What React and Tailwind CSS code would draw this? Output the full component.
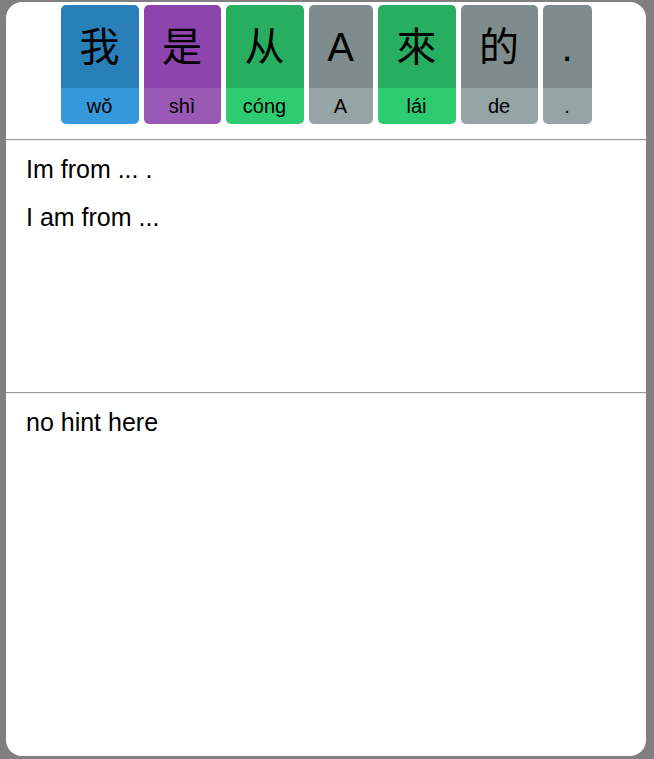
import React from "react";

const cards = [
  { ch: "我", py: "wǒ", w: "w-[78px]", top: "bg-[#2980b9]", bot: "bg-[#3498db]" },
  { ch: "是", py: "shì", w: "w-[77px]", top: "bg-[#8e44ad]", bot: "bg-[#9b59b6]" },
  { ch: "从", py: "cóng", w: "w-[78px]", top: "bg-[#27ae60]", bot: "bg-[#2ecc71]" },
  { ch: "A", py: "A", w: "w-[64px]", top: "bg-[#7f8c8d]", bot: "bg-[#95a5a6]" },
  { ch: "來", py: "lái", w: "w-[78px]", top: "bg-[#27ae60]", bot: "bg-[#2ecc71]" },
  { ch: "的", py: "de", w: "w-[77px]", top: "bg-[#7f8c8d]", bot: "bg-[#95a5a6]" },
  { ch: ".", py: ".", w: "w-[49px]", top: "bg-[#7f8c8d]", bot: "bg-[#95a5a6]" },
];

export default function App() {
  return (
    <div className="min-h-screen bg-[#808080] pt-[2px] pl-[6px] font-['Liberation_Sans','Noto_Sans_CJK_SC',sans-serif] text-black">
      <div className="w-[640px] h-[754px] bg-white rounded-[16px] flex flex-col overflow-hidden">
        <div className="h-[137px] flex justify-center items-start gap-[5px] pt-[3px]">
          {cards.map((c, i) => (
            <div key={i} className={`${c.w} h-[119px] rounded-[5px] overflow-hidden flex flex-col`}>
              <div className={`${c.top} h-[83px] flex items-center justify-center text-[40px] leading-none`}>
                {c.ch}
              </div>
              <div className={`${c.bot} h-[36px] flex items-center justify-center text-[20px] leading-[23px]`}>
                {c.py}
              </div>
            </div>
          ))}
        </div>
        <div className="h-[2px] border-t border-t-[#9a9a9a] border-b border-b-[#eeeeee]" />
        <div className="h-[251px] px-[20px] pt-[14px] flex flex-col gap-[20px] text-[25px] leading-[28px]">
          <p>Im from ... .</p>
          <p>I am from ...</p>
        </div>
        <div className="h-[2px] border-t border-t-[#9a9a9a] border-b border-b-[#eeeeee]" />
        <div className="flex-1 px-[20px] pt-[14px] text-[25px] leading-[28px]">
          <p>no hint here</p>
        </div>
      </div>
    </div>
  );
}
